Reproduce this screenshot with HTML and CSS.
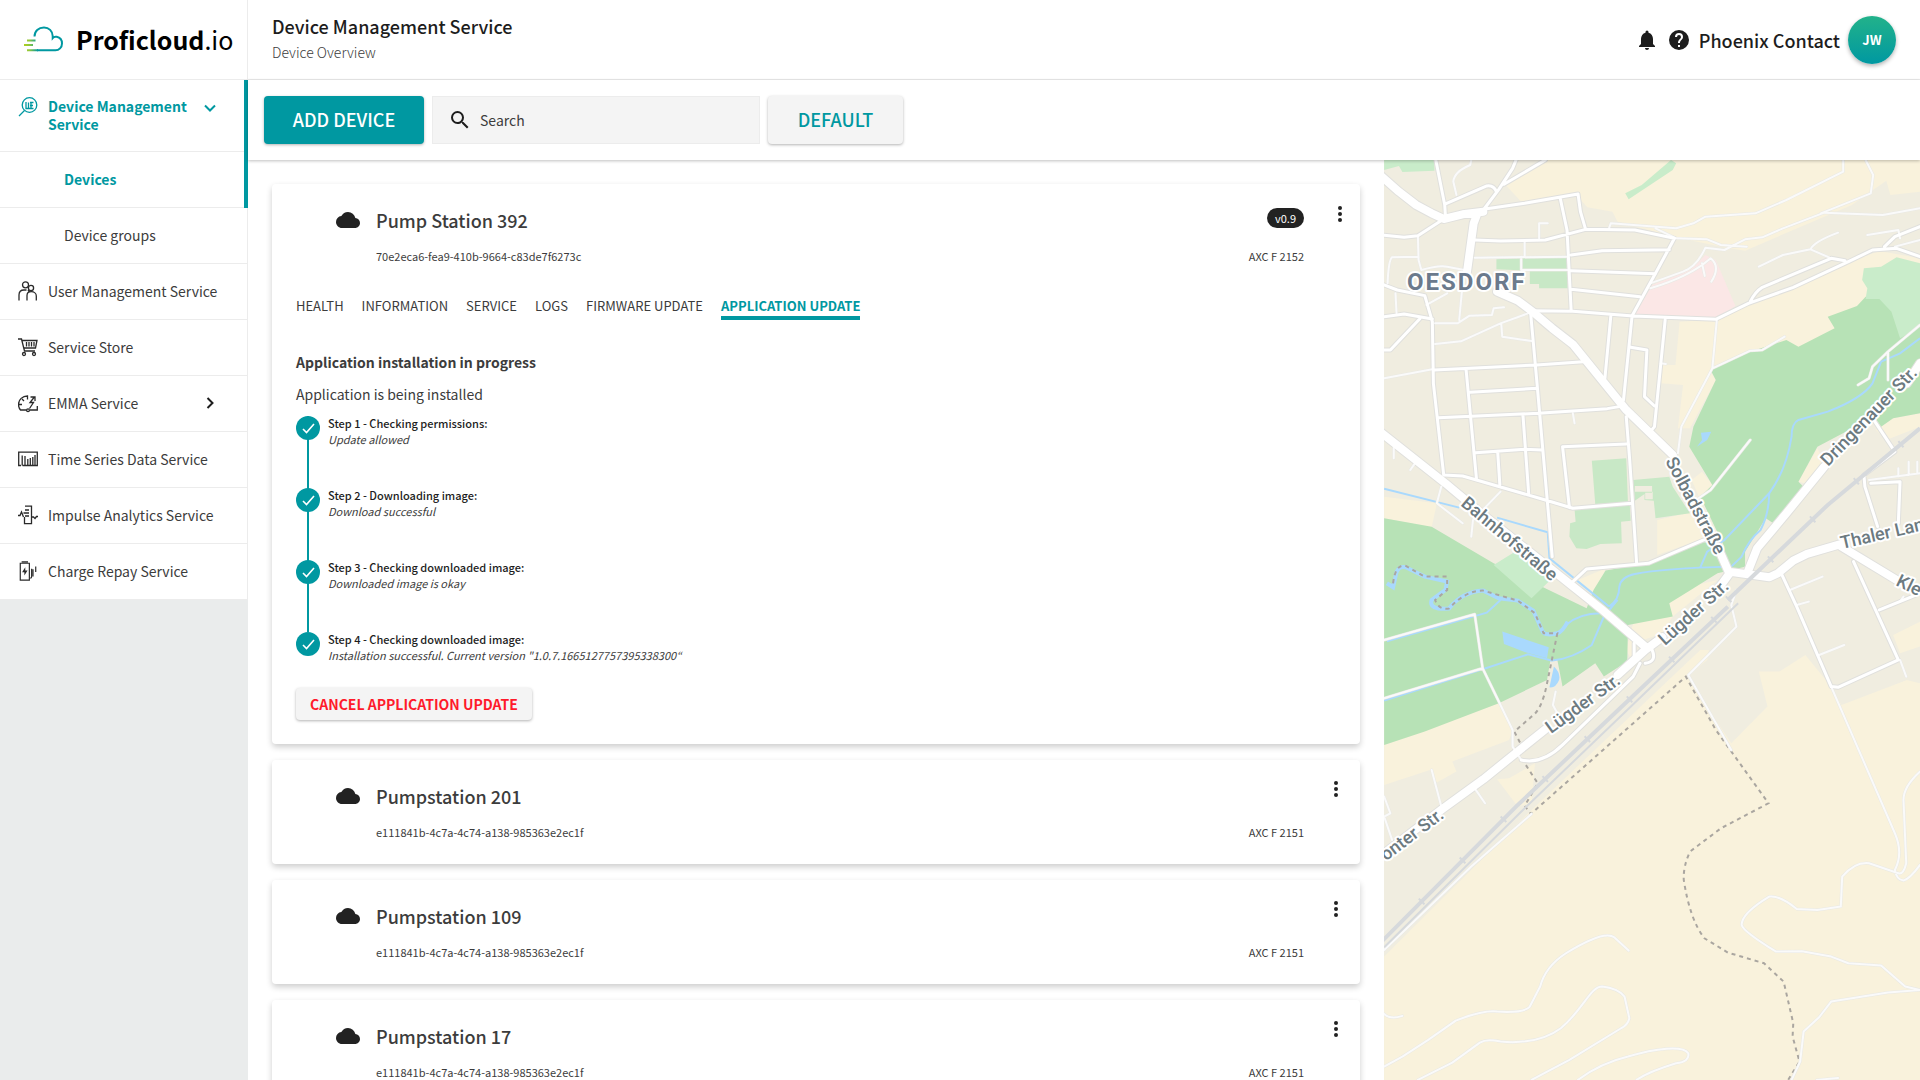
FILE: index.html
```html
<!DOCTYPE html>
<html lang="en">
<head>
<meta charset="utf-8">
<title>Device Management Service – Proficloud.io</title>
<meta name="viewport" content="width=device-width, initial-scale=1">
<link rel="stylesheet" href="styles.css">
</head>
<body>
<svg class="sprite" aria-hidden="true">
  <symbol id="i-cloud" viewBox="0 0 24 24"><path d="M19.35 10.04A7.49 7.49 0 0 0 12 4C9.11 4 6.6 5.64 5.35 8.04A5.994 5.994 0 0 0 0 14c0 3.31 2.69 6 6 6h13c2.76 0 5-2.24 5-5 0-2.64-2.05-4.78-4.65-4.96z"/></symbol>
  <symbol id="i-more" viewBox="0 0 24 24"><circle cx="12" cy="6" r="2"/><circle cx="12" cy="12" r="2"/><circle cx="12" cy="18" r="2"/></symbol>
  <symbol id="i-check" viewBox="0 0 24 24"><path d="M7 13l3.500 3.500L18 8" fill="none" stroke="currentColor" stroke-width="1.600"/></symbol>
</svg>
<div class="app">
  <aside class="sidebar">
    <a class="logo" href="#">
      <svg class="logo-mark" viewBox="0 0 40 26" aria-hidden="true">
        <defs><linearGradient id="lg" x1="0" x2="14" y1="0" y2="0" gradientUnits="userSpaceOnUse"><stop offset="0" stop-color="#b1cf1b"/><stop offset=".4" stop-color="#8cc63f"/><stop offset="1" stop-color="#0098a1"/></linearGradient></defs>
        <g fill="none" stroke-width="2">
          <path stroke="#0098a1" d="M10.500 10.500C10.500 5 14.500 1.500 20 1.500c5 0 8.500 3.500 8.700 8.500v2c1-1.200 2.500-1.500 4-1.200C36 11.500 38 14 38 17.500c0 4-3 6.800-6.500 6.800H13"/>
          <path stroke="url(#lg)" d="M3 14.500h8.500M0 19h9M3 24.300h11M5 14.501h0"/>
        </g>
      </svg>
      <span class="logo-text"><strong>Proficloud</strong>.io</span>
    </a>
    <nav class="nav">
      <div class="nav-active">
        <a class="nav-item nav-item--tall" href="#">
          <svg class="nav-icon" viewBox="0 0 20 20"><circle cx="11.500" cy="8" r="7.300"/><path d="M6.500 13.500L1 19M8 5v6.500h7.500M10.500 5.500v6M13 5.500v6M12 5.500h3.500M12 8.500h3"/></svg>
          <span class="nav-label">Device Management Service</span>
          <svg class="chevron" viewBox="0 0 12 12"><path d="M1 3.500L6 8.500L11 3.500"/></svg>
        </a>
        <a class="nav-item nav-item--sub" href="#">Devices</a>
      </div>
      <a class="nav-item nav-item--sub" href="#">Device groups</a>
      <a class="nav-item" href="#">
        <svg class="nav-icon" viewBox="0 0 20 20"><circle cx="7.500" cy="3.800" r="3"/><circle cx="13" cy="7" r="2.600"/><path d="M1 19.500v-5.500c0-3 2-5 5-5h2.500M9 19.500v-5c0-2 1.500-3.800 4.300-3.800s5 1.800 5 4.300v4.500M10 9l1.500 2"/></svg>
        <span class="nav-label">User Management Service</span>
      </a>
      <a class="nav-item" href="#">
        <svg class="nav-icon" viewBox="0 0 20 20"><path d="M0 2h3.500l3 12h10.500M4 3.500h15l-1.500 7.500H6M8.500 5v4.500M11 5v4.500M13.500 5v4.500M16 5v4.500"/><circle cx="6" cy="17" r="1.500"/><circle cx="16" cy="17" r="1.500"/></svg>
        <span class="nav-label">Service Store</span>
      </a>
      <a class="nav-item" href="#">
        <svg class="nav-icon" viewBox="0 0 20 20"><path d="M8.500 17H2.500C.5 15 .5 13.500.5 11.500.5 6.500 4.500 3 9.500 3v3.500M4 6l2 2M1 11.500h3M16 4.500l-4 5h3.500l-4 6M12.500 4h4.500v4M19.300 13v4H12"/><circle cx="10" cy="17.200" r="1.400"/></svg>
        <span class="nav-label">EMMA Service</span>
        <svg class="chevron chevron--dark" viewBox="0 0 12 12"><path d="M3.500 1L8.500 6L3.500 11"/></svg>
      </a>
      <a class="nav-item" href="#">
        <svg class="nav-icon" viewBox="0 0 20 20"><path d="M3 16.500H.7V3.200h18.600v13.300H4.500M4.200 6.500v10M7 7v9.500M9.800 10v6.500M12.300 9v7.500M14.800 8v8.500M17 6v10"/></svg>
        <span class="nav-label">Time Series Data Service</span>
      </a>
      <a class="nav-item" href="#">
        <svg class="nav-icon" viewBox="0 0 20 20"><path d="M7 1.200h6.500v17.500H6.500V12M0 10.500h2l1.500-3.500 2 5M7 5h4M5.500 8h5.500M7 11h4M13.500 12h2l1.500 1.500 1.500-2h1.500"/></svg>
        <span class="nav-label">Impulse Analytics Service</span>
      </a>
      <a class="nav-item" href="#">
        <svg class="nav-icon" viewBox="0 0 20 22"><path d="M1.500 2.500v18.500h10v-18.500zM3 .9h7M14 8.500v8.500c0 1-.5 1.800-1.500 1.800M15.500 9v8M18.500 6v6"/><path class="nav-fill" d="M7 7L3.500 12.500h2.500v3.500L9.500 10.500H7z"/></svg>
        <span class="nav-label">Charge Repay Service</span>
      </a>
    </nav>
  </aside>

  <div class="page">
    <header class="topbar">
      <div>
        <h1 class="topbar-title">Device Management Service</h1>
        <p class="topbar-sub">Device Overview</p>
      </div>
      <div class="account">
        <button class="icon-btn" aria-label="Notifications"><svg viewBox="0 0 24 24"><path d="M12 22c1.100 0 2-.9 2-2h-4c0 1.100.9 2 2 2zm6-6v-5c0-3.070-1.640-5.640-4.500-6.320V4a1.500 1.500 0 0 0-3 0v.68C7.630 5.360 6 7.920 6 11v5l-2 2v1h16v-1z"/></svg></button>
        <button class="icon-btn" aria-label="Help"><svg viewBox="0 0 24 24"><path d="M12 2a10 10 0 1 0 0 20 10 10 0 0 0 0-20zm1 17h-2v-2h2zm2.070-7.750l-.9.920C13.450 12.900 13 13.500 13 15h-2v-.5c0-1.100.45-2.100 1.170-2.830l1.240-1.260c.37-.36.59-.86.59-1.410a2 2 0 0 0-4 0H8a4 4 0 0 1 8 0c0 .88-.36 1.680-.93 2.250z"/></svg></button>
        <span class="account-name">Phoenix Contact</span>
        <button class="avatar">JW</button>
      </div>
    </header>

    <div class="toolbar">
      <button class="btn btn--primary">ADD DEVICE</button>
      <label class="search">
        <svg viewBox="0 0 24 24" aria-hidden="true"><path d="M15.500 14h-.79l-.28-.27A6.470 6.470 0 0 0 16 9.500 6.500 6.500 0 1 0 9.500 16c1.610 0 3.090-.59 4.230-1.570l.27.28v.79l5 4.990L20.490 19zm-6 0C7.010 14 5 11.990 5 9.500S7.010 5 9.500 5 14 7.010 14 9.500 11.990 14 9.500 14z"/></svg>
        <input type="search" placeholder="Search" aria-label="Search">
      </label>
      <button class="btn btn--plain">DEFAULT</button>
    </div>

    <main class="content">
      <section class="devices">
        <article class="card card--open">
          <div class="card-head">
            <svg class="cloud"><use href="#i-cloud"/></svg>
            <div class="card-main"><h2 class="card-title">Pump Station 392</h2><p class="card-id">70e2eca6-fea9-410b-9664-c83de7f6273c</p></div>
            <div class="card-side"><span class="badge">v0.9</span><span class="card-id">AXC F 2152</span></div>
            <button class="menu-btn" aria-label="Device menu"><svg viewBox="0 0 24 24"><use href="#i-more"/></svg></button>
          </div>
          <div class="card-body">
            <nav class="tabs">
              <a class="tab" href="#">HEALTH</a>
              <a class="tab" href="#">INFORMATION</a>
              <a class="tab" href="#">SERVICE</a>
              <a class="tab" href="#">LOGS</a>
              <a class="tab" href="#">FIRMWARE UPDATE</a>
              <a class="tab tab--active" href="#">APPLICATION UPDATE</a>
            </nav>
            <h3 class="update-title">Application installation in progress</h3>
            <p class="update-text">Application is being installed</p>
            <ol class="steps">
              <li class="step"><svg class="step-dot"><use href="#i-check"/></svg><div><h4 class="step-title">Step 1 - Checking permissions:</h4><p class="step-text">Update allowed</p></div></li>
              <li class="step"><svg class="step-dot"><use href="#i-check"/></svg><div><h4 class="step-title">Step 2 - Downloading image:</h4><p class="step-text">Download successful</p></div></li>
              <li class="step"><svg class="step-dot"><use href="#i-check"/></svg><div><h4 class="step-title">Step 3 - Checking downloaded image:</h4><p class="step-text">Downloaded image is okay</p></div></li>
              <li class="step"><svg class="step-dot"><use href="#i-check"/></svg><div><h4 class="step-title">Step 4 - Checking downloaded image:</h4><p class="step-text">Installation successful. Current version "1.0.7.1665127757395338300“</p></div></li>
            </ol>
            <button class="btn btn--cancel">CANCEL APPLICATION UPDATE</button>
          </div>
        </article>
        <article class="card">
          <div class="card-head">
            <svg class="cloud"><use href="#i-cloud"/></svg>
            <div class="card-main"><h2 class="card-title">Pumpstation 201</h2><p class="card-id">e111841b-4c7a-4c74-a138-985363e2ec1f</p></div>
            <div class="card-side"><span class="card-id">AXC F 2151</span></div>
            <button class="menu-btn" aria-label="Device menu"><svg viewBox="0 0 24 24"><use href="#i-more"/></svg></button>
          </div>
        </article>
        <article class="card">
          <div class="card-head">
            <svg class="cloud"><use href="#i-cloud"/></svg>
            <div class="card-main"><h2 class="card-title">Pumpstation 109</h2><p class="card-id">e111841b-4c7a-4c74-a138-985363e2ec1f</p></div>
            <div class="card-side"><span class="card-id">AXC F 2151</span></div>
            <button class="menu-btn" aria-label="Device menu"><svg viewBox="0 0 24 24"><use href="#i-more"/></svg></button>
          </div>
        </article>
        <article class="card">
          <div class="card-head">
            <svg class="cloud"><use href="#i-cloud"/></svg>
            <div class="card-main"><h2 class="card-title">Pumpstation 17</h2><p class="card-id">e111841b-4c7a-4c74-a138-985363e2ec1f</p></div>
            <div class="card-side"><span class="card-id">AXC F 2151</span></div>
            <button class="menu-btn" aria-label="Device menu"><svg viewBox="0 0 24 24"><use href="#i-more"/></svg></button>
          </div>
        </article>
      </section>

      <div class="map">
        <svg class="map-svg" viewBox="0 0 536 920" preserveAspectRatio="xMinYMin slice" role="img" aria-label="Map of device locations">
          <defs>
            <path id="r-main" d="M0 75L55 125L105 165L150 190L185 207L240 193L300 185M283 190L272 220L252 370M340 425L400 452L445 487L500 535L560 583L640 685L715 780L850 915M980 1190L1012 1265M0 845L190 1000L300 1095L500 1260L640 1375L770 1490M1568 640L1530 700M1290 950L1180 1090L1095 1195L1070 1260M1012 1265L1130 1282L1155 1270L1200 1232L1240 1212L1345 1180M1340 1190L1500 1290M0 2120L180 1978L300 1888L480 1738M690 1575L770 1500L820 1462M1015 1270L980 1320"/>
            <path id="r-mid" d="M162 30L188 165L190 200M190 162L310 108Q330 105 338 125M300 180L345 118L385 55L395 30M360 103L480 30M300 178L420 160L575 132L582 185L597 238M524 148L543 240L555 480M275 270L350 273L480 270L597 238L740 240L855 265L800 370L732 497L707 750M185 207L110 257L70 262L12 256M555 315L645 302L840 299M555 362L800 371M555 418L755 440M0 400L50 420L130 437L152 515L155 700L185 975M12 500L70 492L152 507M115 507L30 600L12 600M437 485L455 690L500 1220M440 482L560 484L735 498L975 508L1070 460L1200 412L1360 335L1430 300L1500 295L1568 320M1075 455Q1090 425 1110 412L1310 325L1350 332M1465 290L1495 260L1568 230M670 500L653 685M828 510L797 830L785 845M728 592L775 600L768 740L797 768M158 660L455 645L590 635M250 660L280 985M262 727L455 715M170 803L460 790L660 776L695 770M278 908L420 898L470 900M342 910L348 1005M415 795L432 1035M530 890L550 1073M530 890L715 882M715 800L725 930L745 1237M185 975L240 978L480 1050L560 1075L730 1060M560 1295L600 1257L780 1240L940 1170M1435 812L1495 905L1405 975L1408 1010L1445 1130M1425 1000L1510 995L1505 1120M1165 1270L1210 1370L1310 1610L1330 1612L1505 1530L1375 1235M1450 1380L1568 1330M410 1830Q470 1845 530 1785L735 1580L755 1540M738 1480L738 1530M770 1540Q805 1535 790 1500"/>
            <path id="r-small" d="M265 30L262 45Q215 65 213 95L222 135M110 257L112 330L120 360M22 400Q25 330 35 322L110 320M120 360Q170 345 195 350L245 360M275 323L545 320M420 275V320M410 320V360L545 360M462 265V220H487M45 430L48 490M135 465L195 430M240 400L230 510M160 520L225 520L260 497L325 495L330 475L360 472M160 582L235 574L350 520L430 490M352 520L355 560L440 573M12 685L152 658M665 235L670 220L860 235L910 220L945 200L1090 190L1180 150L1345 65V30M800 235L860 265L950 268L990 285L1065 290M1410 30L1432 75L1425 130L1280 190M1568 175L1460 195L1290 188L1170 235L1110 262L1060 268L1000 300L945 293Q920 350 880 365L785 400M785 415Q900 380 960 325Q990 350 962 395M935 340L943 378M1100 350L1170 315L1250 298Q1260 275 1330 248M1250 298L1310 325M1415 255L1505 240L1510 265M1568 270L1495 290M978 510L965 655L875 830L865 910M965 655L1075 602L1110 600L1175 560M1075 870L960 1020L925 1045M1568 525L1475 605L1430 650L1420 685L1388 705M1475 605V690M560 790L565 820M815 640L830 642M40 890V925M105 935L88 960M178 1010L165 1060L240 1120M350 1025L270 1110L265 1160M1420 990L1568 970M1505 955V980M1535 935V975M1560 935V970M1190 1320L1285 1280M1210 1365L1245 1355M12 1470L275 1393L298 1555L12 1645M298 1555L385 1740V1790L410 1830M150 1860L178 1970M278 1920L305 1960M12 1940L30 1990L12 2000L35 2070M510 1625L502 1665L515 1690M1035 1320L1020 1365L1035 1430L895 1575L1020 1800M1275 1515L1348 1485M1310 1610L1495 2050Q1520 2110 1495 2160Q1500 2190 1520 2192Q1540 2185 1568 2145M1568 1865Q1520 1910 1520 1950L1528 2140Q1520 2175 1505 2170L1420 2140Q1380 2135 1342 2180L1338 2270L1270 2280L1210 2277Q1160 2235 1130 2240Q1050 2290 1050 2325Q1055 2345 1150 2405L1225 2404L1310 2420L1360 2440L1455 2447L1525 2510L1568 2520L1475 2528L1310 2555L1275 2602L1230 2645L1220 2735L1195 2790M1268 2790L1330 2784M12 2400L265 2150L440 1992M12 2592Q30 2610 65 2598M12 2750L65 2720L140 2670L220 2612Q300 2580 340 2585Q420 2590 435 2570L465 2510Q480 2450 540 2410Q650 2340 680 2362L722 2402M110 2790L210 2738L290 2678Q310 2665 350 2675Q460 2685 525 2635C590 2580 610 2510 645 2510Q690 2515 710 2540L724 2605Q720 2625 700 2635L550 2730L440 2790M575 2790Q640 2740 720 2720C800 2695 880 2685 895 2710Q900 2735 860 2740Q780 2765 745 2790M1510 1530L1528 1580M1510 1355L1520 1340"/>
            <path id="r-rail" d="M0 2380L400 1965L700 1672L1010 1370M1010 1350L1300 1065L1568 835"/>
          </defs>
          <rect class="m-urban" width="536" height="920"/>
          <g class="m-geo" transform="translate(-4 -10) scale(.3444 .3333)">
            <path class="m-field" d="M480 30L365 105L410 155L565 130L602 172L675 185L690 215L860 262L990 290L1060 302L1370 165L1470 92L1482 135L1568 125V30ZM870 515L975 508L1075 460L1350 340L1450 303L1568 325V620L960 665L975 690L900 835L865 835L880 705L815 700L820 645H858ZM905 990L935 965L965 1005L930 1050ZM12 1040L165 1060L150 1132L12 1105ZM805 1110L930 1080L950 1162L805 1215ZM575 1290L655 1255L625 1340ZM1270 895L1290 940L1235 1000L1215 995ZM1568 790L1490 805L1440 840L1470 870L1568 830ZM12 2420L440 1980L930 1500L955 1500L950 1530L890 1580L1020 1780L1125 1670L1100 1565L1160 1565L1235 1515L1310 1610L1340 1665L1530 1590L1568 1600V2790H12ZM12 1785L345 1660L385 1740L375 1770L210 1835L222 1865L165 1898L145 1860L12 1905ZM340 1888L375 1885L450 1840L440 1960L400 1970ZM735 1420L900 1310L980 1290L850 1400L820 1450L738 1480L735 1540L715 1500ZM1490 1455L1568 1415V1490L1510 1510Z"/>
            <path class="m-wood" d="M960 660L1075 605L1180 570L1215 590L1320 535L1300 500L1385 468L1410 440L1568 440V790L1490 805L1455 830L1435 800L1270 890L1215 995L1230 1010L1140 1118L1120 1105L1060 1205V1250L980 1270L900 1322L840 1360L850 1400L720 1425L718 1535L650 1580L625 1540L530 1610L515 1530H495L485 1590L345 1660L130 1745L12 1785V1105L150 1130L330 1240L600 1375L620 1320L655 1262L780 1240L935 1175L1000 1190L930 1040L965 1005L898 890L910 830L975 690Z"/>
            <path class="m-grass" d="M1405 355L1455 350L1500 322L1568 340V530L1510 565L1485 485L1450 447H1410L1415 415L1400 390ZM330 1245L400 1200L500 1285L440 1345ZM845 30L860 40L850 60L722 148L712 130L760 105ZM12 30H158V62L65 66L55 48L12 60Z"/>
            <path class="m-park" d="M615 932L715 925L720 1058L625 1062ZM735 990L840 980L850 1010L900 1090L800 1105L795 1052L768 1050V1032L740 1052ZM565 1080L725 1062L728 1112L700 1115L702 1180L640 1182L600 1197L570 1195L550 1160L552 1120L568 1115ZM338 328L545 318V415H462V402H435V362L338 358Z"/>
            <path class="m-urban" d="M740 1008H790V1028H770V1048H792V1025H740Z"/>
            <path class="m-clinic" d="M740 495L790 405L900 360L945 315L975 330L1032 468L980 503Z"/>
            <path class="m-lake" d="M355 1445L490 1492L485 1525L425 1508L360 1482ZM505 1550Q525 1570 520 1590Q510 1615 492 1612ZM932 848L962 845L950 870L920 890L935 870Z"/>
            <path class="m-river" d="M12 1016L230 1073M340 1103L487 1147L492 1225L665 1370M665 1370Q695 1350 695 1310Q700 1280 740 1272Q820 1255 1020 1250M1568 565L1510 610L1455 635L1430 700Q1400 745 1300 785L1215 810Q1195 820 1195 860Q1180 960 1130 1030L1000 1170L950 1205L930 1252M1130 1030Q1130 1090 1105 1140Q1070 1170 1050 1220L1020 1250M20 1474L270 1400L310 1388L350 1350M12 1652L298 1558L430 1513L500 1532Q560 1525 615 1485L650 1400L690 1350M540 1425Q580 1390 640 1390"/>
            <path class="m-river m-river--wide" d="M20 1300L38 1312L45 1280Q50 1245 75 1252L130 1280L195 1295L190 1320L150 1350Q140 1380 200 1376Q240 1325 300 1322L345 1345L400 1352L445 1382L470 1440Q475 1460 515 1450Q530 1445 545 1415"/>
            <path class="m-trail" d="M38 1300Q45 1240 75 1248L130 1280H195L195 1320L160 1350Q170 1380 200 1376Q250 1320 300 1322L400 1352L450 1390L475 1450H515L485 1600Q470 1680 440 1700L390 1745L410 1785L395 1800L458 1900L420 1968L438 1992L888 1580L975 1740L1128 1960L990 2035L900 2105Q880 2150 882 2190Q900 2310 942 2365L1010 2408L1115 2440L1172 2495L1200 2620L1198 2660L1218 2735L1185 2790"/>
          </g>
          <g class="m-geo m-casing" transform="translate(-4 -10) scale(.3444 .3333)"><use href="#r-small" class="c-small"/><use href="#r-mid" class="c-mid"/><use href="#r-main" class="c-main"/></g>
          <g class="m-geo m-road" transform="translate(-4 -10) scale(.3444 .3333)"><use href="#r-small" class="w-small"/><use href="#r-mid" class="w-mid"/><use href="#r-main" class="w-main"/></g>
          <g class="m-geo m-rail" transform="translate(-4 -10) scale(.3444 .3333)"><use href="#r-rail" class="w-rail"/><path class="w-rail2" d="M12 2392L420 1975L730 1668L1040 1360"/><use href="#r-rail" class="w-ties"/></g>
          <text class="m-town" x="23" y="130">OESDORF</text>
          <g class="m-label">
            <text transform="translate(76 345) rotate(40)">Bahnhofstraße</text>
            <text transform="translate(281 301) rotate(62)">Solbadstraße</text>
            <text transform="translate(444 307) rotate(-46)">Dringenauer Str.</text>
            <text transform="translate(458 389) rotate(-13)">Thaler Lan</text>
            <text transform="translate(511 425) rotate(26)">Kle</text>
            <text transform="translate(281 486) rotate(-42)">Lügder Str.</text>
            <text transform="translate(167 574) rotate(-36)">Lügder Str.</text>
            <text transform="translate(61 657) rotate(-37)" text-anchor="end">onter Str.</text>
          </g>
        </svg>
      </div>
    </main>
  </div>
</div>
</body>
</html>
```
FILE: styles.css
```css
:root {
  --teal: #0098a1;
  --ink: #1d1d1d;
  --text: #3c3c3c;
  --line: #ececec;
  --soft: #f4f4f4;
}

* { box-sizing: border-box; }

body {
  margin: 0;
  background: #fff;
  color: var(--text);
  font-family: "Noto Sans CJK KR", "Noto Sans", sans-serif;
  font-size: 14px;
  line-height: 20px;
}

h1, h2, h3, h4, p, ol { margin: 0; padding: 0; }
a { color: inherit; text-decoration: none; }
button, input { font: inherit; color: inherit; }
button { border: 0; background: none; padding: 0; cursor: pointer; }
svg { display: block; fill: currentColor; }
.sprite { display: none; }

.app { display: flex; height: 100vh; overflow: hidden; }

/* Sidebar */
.sidebar { flex: none; width: 248px; background: #eaecec; }
.logo {
  display: flex;
  align-items: center;
  gap: 12px;
  height: 80px;
  padding: 0 0 2px 24px;
  border-right: 1px solid var(--line);
  border-bottom: 1px solid var(--line);
  background: #fff;
  color: #000;
}
.logo-mark { width: 40px; height: 26px; }
.logo-text { font-size: 25px; line-height: 32px; white-space: nowrap; }
.logo-text strong { font-weight: 700; }

.nav-active { color: var(--teal); font-weight: 700; box-shadow: inset -4px 0 var(--teal); }
.nav-active .nav-item { border-right: 0; margin-right: 4px; }
.nav-item {
  display: flex;
  align-items: center;
  height: 56px;
  padding: 0 20px 2px 18px;
  gap: 10px;
  border-right: 1px solid var(--line);
  border-bottom: 1px solid var(--line);
  background: #fff;
  line-height: 18px;
}
.nav-item--tall { height: 72px; align-items: flex-start; padding-top: 17px; }
.nav-item--sub { padding-left: 64px; }
.nav-label { flex: 1; white-space: nowrap; }
.nav-item--tall .nav-label { white-space: normal; }
.nav-icon { flex: none; width: 20px; height: 20px; fill: none; stroke: currentColor; stroke-width: 1.3; color: #2a2a2a; }
.nav-active .nav-icon { color: var(--teal); }
.nav-fill { fill: currentColor; stroke: none; }
.chevron { flex: none; width: 12px; height: 12px; margin: 5px 8px 0 0; fill: none; stroke: currentColor; stroke-width: 2; color: var(--teal); }
.chevron--dark { margin: 0 11px 0 0; color: var(--ink); }

/* Header and toolbar */
.page { flex: 1; min-width: 0; display: flex; flex-direction: column; }
.topbar {
  flex: none;
  display: flex;
  justify-content: space-between;
  height: 80px;
  padding: 14px 24px 0;
  border-bottom: 1px solid var(--line);
}
.topbar-title { font-size: 18px; line-height: 24px; font-weight: 500; color: var(--ink); }
.topbar-sub { line-height: 28px; font-weight: 300; }
.account { display: flex; align-items: center; gap: 8px; height: 52px; color: var(--ink); }
.icon-btn svg { width: 24px; height: 24px; }
.account-name { font-size: 18px; font-weight: 500; }
.avatar {
  width: 48px;
  height: 48px;
  border-radius: 50%;
  background: linear-gradient(#22b28a, #0098a1);
  box-shadow: 0 2px 4px rgba(0, 0, 0, .3);
  color: #fff;
  font-size: 13px;
  font-weight: 700;
}

.toolbar {
  position: relative;
  z-index: 1;
  flex: none;
  display: flex;
  gap: 8px;
  padding: 16px;
  background: #fff;
  box-shadow: 0 1px 3px rgba(0, 0, 0, .25);
}
.btn {
  height: 48px;
  padding: 0 0 2px;
  border-radius: 4px;
  background: var(--soft);
  box-shadow: 0 1px 3px rgba(0, 0, 0, .3);
  font-size: 18px;
  font-weight: 500;
}
.btn--primary { width: 160px; background: var(--teal); color: #fff; }
.btn--plain { width: 135px; color: var(--teal); }
.btn--cancel { height: 32px; padding: 0 14px; font-size: 14px; font-weight: 700; color: #ff1a2b; }
.search {
  display: flex;
  align-items: center;
  gap: 8px;
  width: 328px;
  padding-left: 15px;
  border: 1px solid var(--line);
  background: var(--soft);
}
.search svg { width: 24px; height: 24px; color: var(--ink); }
.search input { flex: 1; min-width: 0; border: 0; padding: 0; background: none; outline: 0; }
.search input::placeholder { color: var(--text); opacity: 1; }

/* Device list */
.content { flex: 1; min-height: 0; display: grid; grid-template-columns: 142fr 67fr; }
.devices {
  display: flex;
  flex-direction: column;
  gap: 16px;
  padding: 24px;
  overflow-y: auto;
  scrollbar-width: none;
}
.card { flex: none; border-radius: 4px; background: #fff; box-shadow: 0 3px 6px rgba(0, 0, 0, .2); }
.card-head { display: flex; align-items: flex-start; padding: 24px 12px 24px 64px; }
.cloud { width: 24px; height: 24px; color: #222; }
.card-main { flex: 1; padding-left: 16px; }
.card-title { font-size: 18px; line-height: 24px; font-weight: 500; }
.card-id { margin-top: 16px; font-size: 11px; line-height: 16px; }
.card-side { display: flex; flex-direction: column; align-items: flex-end; align-self: stretch; justify-content: flex-end; }
.card-side .badge { margin-bottom: auto; padding: 0 8px; border-radius: 10px; background: #222; color: #fff; font-size: 11px; line-height: 20px; }
.menu-btn { margin: -7px 0 0 20px; color: #222; }
.menu-btn svg { width: 24px; height: 24px; }
.card--open .card-head { padding-right: 8px; }
.card--open .menu-btn { margin: -6px 0 0 24px; }

.card-body { padding: 8px 24px 24px; }
.tabs { display: flex; gap: 18px; font-size: 13px; }
.tab { border-bottom: 4px solid transparent; line-height: 20px; }
.tab--active { border-color: var(--teal); color: var(--teal); font-weight: 700; }
.update-title { margin-top: 28px; font-size: 14px; line-height: 28px; font-weight: 700; }
.update-text { margin-top: 4px; line-height: 28px; }
.steps { margin-top: 8px; list-style: none; }
.step {
  display: flex;
  gap: 8px;
  min-height: 72px;
  background: linear-gradient(var(--teal), var(--teal)) 11px 0 / 2px 100% no-repeat;
}
.step:last-child { min-height: 56px; background: none; }
.step-dot { flex: none; width: 24px; height: 24px; border-radius: 50%; background: var(--teal); color: #fff; }
.step-title, .step-text { font-size: 11px; line-height: 16px; }
.step-title { line-height: 15px; font-weight: 500; color: var(--ink); }
.step-text { font-style: italic; }

/* Map */
.map { overflow: hidden; background: #f9f2dc; }
.map-svg { width: 100%; height: 100%; }
.m-urban { fill: #f0ede0; }
.m-field { fill: #f9f2dc; }
.m-wood { fill: #b7e2b6; }
.m-grass { fill: #c9ecca; }
.m-park { fill: #c8e8c6; }
.m-clinic { fill: #fbe7e6; }
.m-lake { fill: #a9d9fd; }
.m-geo path { vector-effect: non-scaling-stroke; }
.m-river { fill: none; stroke: #a9d9fd; stroke-width: 2; }
.m-river--wide { stroke-width: 4; }
.m-trail { fill: none; stroke: #aaa6a0; stroke-width: 2; stroke-dasharray: 4 4; }
.m-casing, .m-road, .m-rail { fill: none; stroke-linejoin: round; stroke-linecap: round; }
#r-main, #r-mid, #r-small, #r-rail { vector-effect: non-scaling-stroke; }
.m-casing { stroke: #e0e0dd; }
.m-road { stroke: #fff; }
.m-rail { stroke: #d6d9dc; stroke-linecap: butt; }
.c-small { stroke-width: 3; stroke: #e9e9e4; }
.c-mid { stroke-width: 5; }
.c-main { stroke-width: 10; }
.w-small { stroke-width: 2; stroke: #fafafa; }
.w-mid { stroke-width: 3; }
.w-main { stroke-width: 8; }
.w-rail { stroke-width: 4; }
.w-rail2 { stroke-width: 2; }
.w-ties { stroke-width: 8; stroke-dasharray: 2 56; }
.m-town, .m-label {
  font-family: Roboto, sans-serif;
  font-weight: 500;
  stroke: #fff;
  stroke-width: 4;
  stroke-linejoin: round;
  paint-order: stroke;
}
.m-town { fill: #6b7a8c; font-size: 24px; font-weight: 700; letter-spacing: 2px; }
.m-label { fill: #6c7a80; font-size: 18px; }
```
